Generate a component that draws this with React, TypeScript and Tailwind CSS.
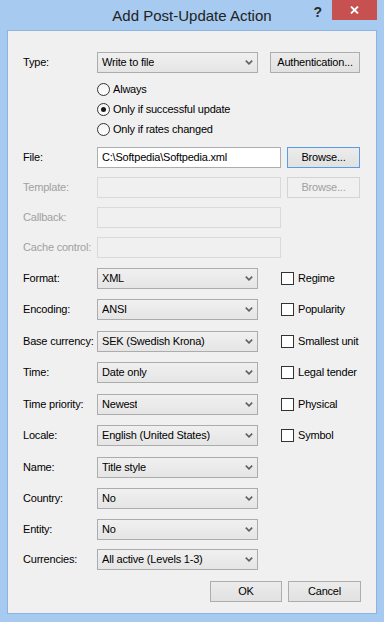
import type { ReactNode } from "react";

const font = { fontFamily: '"Liberation Sans", Arial, sans-serif' };

function Chevron() {
  return (
    <svg width="8" height="5" viewBox="0 0 8 5" className="shrink-0">
      <path d="M0.8 0.6 L4 3.8 L7.2 0.6" fill="none" stroke="#606060" strokeWidth="1.6" />
    </svg>
  );
}

function Combo({ value, w = "w-[161px]" }: { value: string; w?: string }) {
  return (
    <div
      className={`${w} h-[21px] flex items-center justify-between pl-[4px] pr-[4px] border border-[#acacac] bg-gradient-to-b from-[#f0f0f0] to-[#e5e5e5] text-black`}
    >
      <span className="truncate">{value}</span>
      <Chevron />
    </div>
  );
}

function Edit({ value = "", disabled = false }: { value?: string; disabled?: boolean }) {
  return (
    <div
      className={`w-[184px] h-[21px] flex items-center pl-[4px] border ${
        disabled ? "border-[#d9d9d9] bg-[#f0f0f0]" : "border-[#abadb3] bg-white"
      }`}
    >
      {value}
    </div>
  );
}

function Button({
  children,
  w,
  disabled = false,
  focused = false,
}: {
  children: ReactNode;
  w: string;
  disabled?: boolean;
  focused?: boolean;
}) {
  const look = disabled
    ? "border-[#d4d4d4] bg-[#f0f0f0] text-[#a0a0a0]"
    : focused
    ? "border-[#569de5] bg-gradient-to-b from-[#ececec] to-[#e1e1e1] text-black"
    : "border-[#adadad] bg-gradient-to-b from-[#ececec] to-[#e1e1e1] text-black";
  return (
    <div className={`${w} h-[21px] flex items-center justify-center border ${look}`}>
      {children}
    </div>
  );
}

function Radio({ label, checked = false }: { label: string; checked?: boolean }) {
  return (
    <div className="h-[20px] flex items-center gap-[3px]">
      <span className="w-[13px] h-[13px] rounded-full border border-[#333] bg-gradient-to-b from-[#f4f4f4] to-white flex items-center justify-center">
        {checked && <span className="w-[5px] h-[5px] rounded-full bg-[#1a1a1a]" />}
      </span>
      <span>{label}</span>
    </div>
  );
}

function Check({ label }: { label: string }) {
  return (
    <div className="ml-[23px] flex items-center gap-[4px]">
      <span className="w-[13px] h-[13px] border border-[#333] bg-white" />
      <span>{label}</span>
    </div>
  );
}

function Label({ children, disabled = false }: { children: ReactNode; disabled?: boolean }) {
  return (
    <span className={`w-[74px] shrink-0 whitespace-nowrap ${disabled ? "text-[#a0a0a0]" : "text-black"}`}>
      {children}
    </span>
  );
}

const combos = [
  { label: "Format:", value: "XML", check: "Regime", mt: "mt-[10px]" },
  { label: "Encoding:", value: "ANSI", check: "Popularity", mt: "mt-[10px]" },
  { label: "Base currency:", value: "SEK (Swedish Krona)", check: "Smallest unit", mt: "mt-[11px]" },
  { label: "Time:", value: "Date only", check: "Legal tender", mt: "mt-[10px]" },
  { label: "Time priority:", value: "Newest", check: "Physical", mt: "mt-[11px]" },
  { label: "Locale:", value: "English (United States)", check: "Symbol", mt: "mt-[10px]" },
  { label: "Name:", value: "Title style", mt: "mt-[11px]" },
  { label: "Country:", value: "No", mt: "mt-[10px]" },
  { label: "Entity:", value: "No", mt: "mt-[10px]" },
  { label: "Currencies:", value: "All active (Levels 1-3)", mt: "mt-[9px]" },
];

export default function App() {
  return (
    <div
      className="w-[384px] h-[622px] bg-[#a6caf0] flex flex-col text-[11px] leading-none select-none"
      style={font}
    >
      {/* title bar */}
      <div className="h-[30px] shrink-0 grid grid-cols-[1fr_auto_1fr]">
        <div />
        <div className="text-[15px] text-[#222] pt-[8px]">Add Post-Update Action</div>
        <div className="flex justify-end items-start pr-[7px]">
          <span className="text-[14px] font-bold text-[#2a2a2a] mt-[5px] mr-[10px]">?</span>
          <div className="w-[45px] h-[20px] bg-[#c75050] flex items-center justify-center">
            <svg width="9" height="8" viewBox="0 0 9 8">
              <path d="M1 0.5 L8 7.5 M8 0.5 L1 7.5" stroke="white" strokeWidth="1.8" />
            </svg>
          </div>
        </div>
      </div>

      {/* client area */}
      <div className="flex-1 mx-[7px] mb-[8px] border border-[#8fb3dc] bg-[#f0f0f0] pl-[15px] pt-[21px] flex flex-col tracking-[-0.2px]">
        <div className="flex items-center">
          <Label>Type:</Label>
          <Combo value="Write to file" />
          <div className="ml-[12px]">
            <Button w="w-[90px]">Authentication...</Button>
          </div>
        </div>

        <div className="ml-[74px] mt-[6px] flex flex-col">
          <Radio label="Always" />
          <Radio label="Only if successful update" checked />
          <Radio label="Only if rates changed" />
        </div>

        <div className="flex items-center mt-[8px]">
          <Label>File:</Label>
          <Edit value="C:\Softpedia\Softpedia.xml" />
          <div className="ml-[6px]">
            <Button w="w-[73px]" focused>
              Browse...
            </Button>
          </div>
        </div>

        <div className="flex items-center mt-[9px]">
          <Label disabled>Template:</Label>
          <Edit disabled />
          <div className="ml-[6px]">
            <Button w="w-[73px]" disabled>
              Browse...
            </Button>
          </div>
        </div>

        <div className="flex items-center mt-[9px]">
          <Label disabled>Callback:</Label>
          <Edit disabled />
        </div>

        <div className="flex items-center mt-[9px]">
          <Label disabled>Cache control:</Label>
          <Edit disabled />
        </div>

        {combos.map((c) => (
          <div key={c.label} className={`flex items-center ${c.mt}`}>
            <Label>{c.label}</Label>
            <Combo value={c.value} />
            {c.check && <Check label={c.check} />}
          </div>
        ))}

        <div className="flex justify-end gap-[6px] mt-[11px] pr-[15px]">
          <Button w="w-[72px]">OK</Button>
          <Button w="w-[73px]">Cancel</Button>
        </div>
      </div>
    </div>
  );
}
